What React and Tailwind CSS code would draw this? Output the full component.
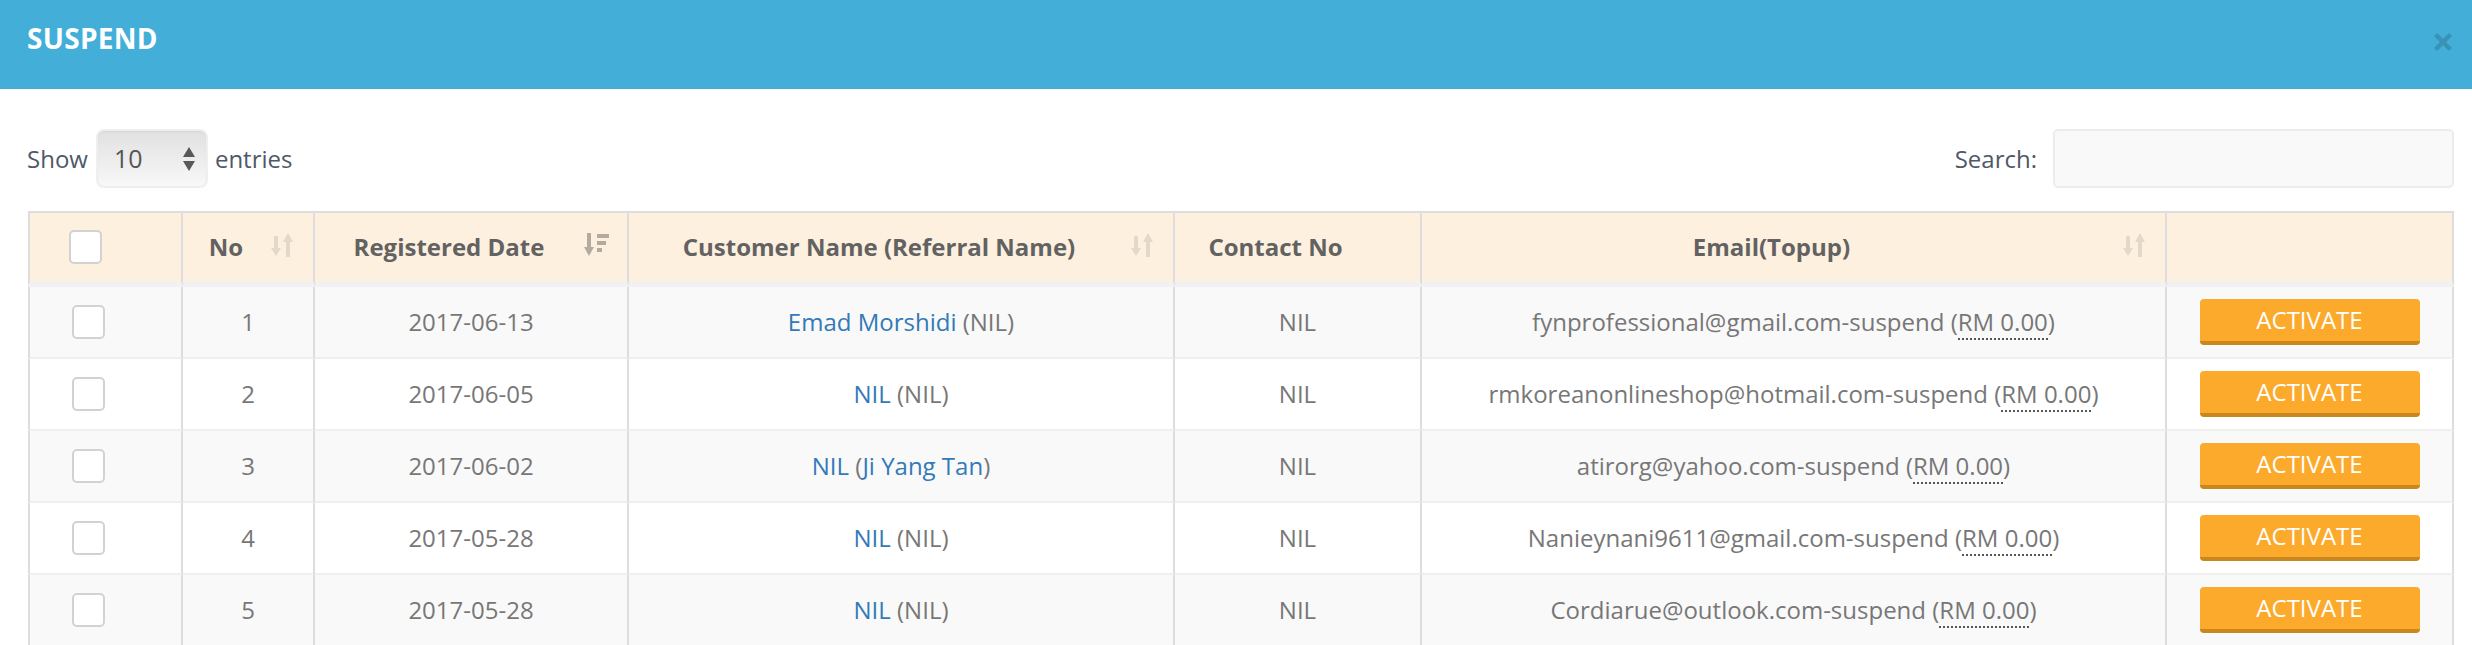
import React from "react";

const rows = [
  { no: 1, date: "2017-06-13", name: "Emad Morshidi", ref: "NIL", refLink: false, contact: "NIL", email: "fynprofessional@gmail.com-suspend" },
  { no: 2, date: "2017-06-05", name: "NIL", ref: "NIL", refLink: false, contact: "NIL", email: "rmkoreanonlineshop@hotmail.com-suspend" },
  { no: 3, date: "2017-06-02", name: "NIL", ref: "Ji Yang Tan", refLink: true, contact: "NIL", email: "atirorg@yahoo.com-suspend" },
  { no: 4, date: "2017-05-28", name: "NIL", ref: "NIL", refLink: false, contact: "NIL", email: "Nanieynani9611@gmail.com-suspend" },
  { no: 5, date: "2017-05-28", name: "NIL", ref: "NIL", refLink: false, contact: "NIL", email: "Cordiarue@outlook.com-suspend" },
];

function SortBoth() {
  return (
    <svg width="24" height="24" viewBox="0 0 24 24" fill="#e3d9c9">
      <rect x="3" y="3" width="4" height="14" />
      <polygon points="0,15 10,15 5,23" />
      <polygon points="12,9 22,9 17,0" />
      <rect x="15" y="8" width="4" height="16" />
    </svg>
  );
}

function SortDesc() {
  return (
    <svg width="25" height="24" viewBox="0 0 25 24" fill="#b3ab9f">
      <rect x="3" y="0" width="4" height="16" />
      <polygon points="0,14 10,14 5,23" />
      <rect x="13" y="1" width="12" height="4" />
      <rect x="13" y="8" width="9" height="4" />
      <rect x="13" y="15" width="5" height="4" />
    </svg>
  );
}

function Checkbox() {
  return <div className="w-[33px] h-[34px] rounded-[5px] border-2 border-[#d2d2d2] bg-white" />;
}

function Th({ children, icon }) {
  return (
    <th className="p-0 bg-[#fef0de] border-t-2 border-t-[#dddddd] border-b-[6px] border-b-[#f1f1f1] border-r-2 border-r-[#dddddd]">
      <div className="relative h-[68px] flex items-center justify-center pl-[16px] pr-[60px] text-[24px] font-bold text-[#626262] whitespace-nowrap">
        {children}
        {icon && <div className="absolute right-[18px] top-[20px] flex">{icon}</div>}
      </div>
    </th>
  );
}

function Td({ children }) {
  return (
    <td className="p-0 border-r-2 border-r-[#dddddd] border-b-2 border-b-[#efefef]">
      <div className="h-[70px] flex items-center justify-center whitespace-nowrap">{children}</div>
    </td>
  );
}

export default function App() {
  return (
    <div className="w-[2472px] h-[645px] overflow-hidden bg-white font-['Open_Sans',sans-serif]">
      <div className="h-[89px] bg-[#43afd9] flex justify-between pl-[27px] pr-[19px]">
        <h4 className="pt-[24px] text-[28px] leading-[28px] font-bold text-white tracking-[0.3px]">SUSPEND</h4>
        <div className="pt-[32px]">
          <svg width="20" height="20" viewBox="0 0 20 20">
            <path d="M2.5 2.5 L17.5 17.5 M17.5 2.5 L2.5 17.5" stroke="#3993b7" strokeWidth="4.5" fill="none" />
          </svg>
        </div>
      </div>

      <div className="pl-[28px] pr-[18px] pt-[40px]">
        <div className="flex justify-between items-center h-[59px] text-[24px] text-[#4f5869]">
          <div className="flex items-center">
            <span className="ml-[-1px]">Show</span>
            <div className="ml-[8px] w-[112px] h-[59px] rounded-[8px] border-2 border-[#efefef] bg-linear-to-b from-[#e1e1e1] to-[#f8f8f8] flex items-center justify-between pl-[16px] pr-[11px] shadow-[inset_0_1px_2px_rgba(0,0,0,0.06)]">
              <span className="text-[25px] text-[#555555] leading-none">10</span>
              <svg width="12" height="24" viewBox="0 0 12 24" fill="#585858">
                <polygon points="6,0 12,10 0,10" />
                <polygon points="0,14 12,14 6,24" />
              </svg>
            </div>
            <span className="ml-[7px]">entries</span>
          </div>
          <div className="flex items-center">
            <span>Search:</span>
            <div className="ml-[16px] w-[401px] h-[59px] rounded-[5px] border-2 border-[#ececec] bg-[#f9f9f9]" />
          </div>
        </div>

        <table className="mt-[23px] w-[2426px] table-fixed border-separate border-spacing-0">
          <colgroup>
            <col className="w-[155px]" />
            <col className="w-[132px]" />
            <col className="w-[314px]" />
            <col className="w-[546px]" />
            <col className="w-[247px]" />
            <col className="w-[745px]" />
            <col className="w-[287px]" />
          </colgroup>
          <thead>
            <tr>
              <th className="p-0 bg-[#fef0de] border-t-2 border-t-[#dddddd] border-l-2 border-l-[#dddddd] border-r-2 border-r-[#dddddd] border-b-[6px] border-b-[#f1f1f1]">
                <div className="h-[68px] flex items-center pl-[39px]">
                  <Checkbox />
                </div>
              </th>
              <Th icon={<SortBoth />}>No</Th>
              <Th icon={<SortDesc />}>Registered Date</Th>
              <Th icon={<SortBoth />}>Customer Name (Referral Name)</Th>
              <Th>Contact No</Th>
              <Th icon={<SortBoth />}>Email(Topup)</Th>
              <th className="p-0 bg-[#fef0de] border-t-2 border-t-[#dddddd] border-r-2 border-r-[#dddddd] border-b-[6px] border-b-[#f1f1f1]">
                <div className="h-[68px]" />
              </th>
            </tr>
          </thead>
          <tbody className="text-[24px] text-[#777777]">
            {rows.map((r, i) => (
              <tr key={r.no} className={i % 2 === 0 ? "bg-[#f9f9f9]" : "bg-white"}>
                <td className="p-0 border-l-2 border-l-[#dddddd] border-r-2 border-r-[#dddddd] border-b-2 border-b-[#efefef]">
                  <div className="h-[70px] flex items-center pl-[42px]">
                    <Checkbox />
                  </div>
                </td>
                <Td>{r.no}</Td>
                <Td>{r.date}</Td>
                <Td>
                  <span>
                    <span className="text-[#337ab7]">{r.name}</span>{" "}
                    (
                    {r.refLink ? <span className="text-[#337ab7]">{r.ref}</span> : r.ref}
                    )
                  </span>
                </Td>
                <Td>{r.contact}</Td>
                <Td>
                  <span>
                    {r.email} (<span className="border-b-2 border-dotted border-[#555555]">RM 0.00</span>)
                  </span>
                </Td>
                <Td>
                  <div className="w-[220px] h-[46px] rounded-[4px] bg-[#fcaa2c] border-b-4 border-b-[#c98720] flex items-center justify-center text-white text-[24px]">
                    ACTIVATE
                  </div>
                </Td>
              </tr>
            ))}
          </tbody>
        </table>
      </div>
    </div>
  );
}
